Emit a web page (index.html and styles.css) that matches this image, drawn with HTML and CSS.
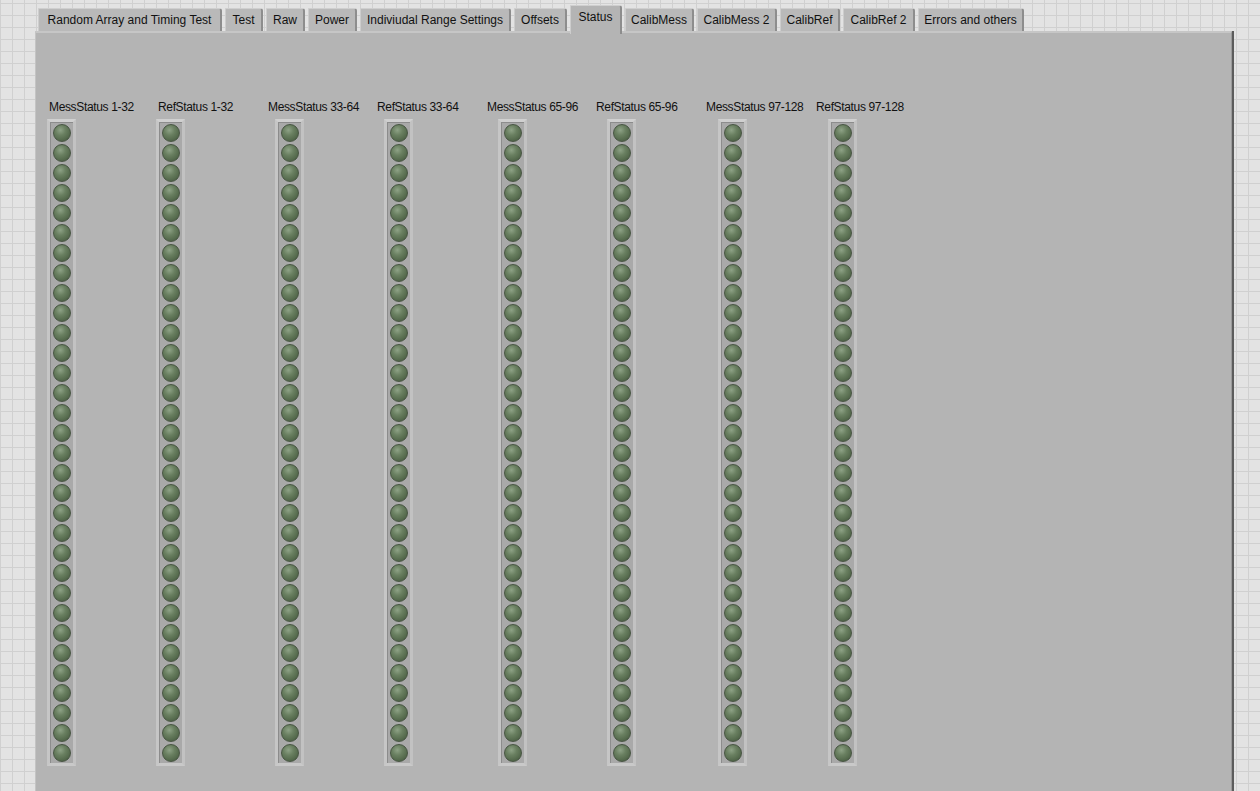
FILE: index.html
```html
<!DOCTYPE html>
<html>
<head>
<meta charset="utf-8">
<link rel="stylesheet" href="styles.css">
</head>
<body>
<div class="tabs">
  <div class="tab w1">Random Array and Timing Test</div>
  <div class="tab w2">Test</div>
  <div class="tab w3">Raw</div>
  <div class="tab w4">Power</div>
  <div class="tab w5">Indiviudal Range Settings</div>
  <div class="tab w6">Offsets</div>
  <div class="tab w7 active">Status</div>
  <div class="tab w8">CalibMess</div>
  <div class="tab w9">CalibMess 2</div>
  <div class="tab w10">CalibRef</div>
  <div class="tab w11">CalibRef 2</div>
  <div class="tab w12">Errors and others</div>
</div>
<div class="panel">
  <div class="columns" id="cols"></div>
</div>
<script src="app.js"></script>
</body>
</html>
```

FILE: app.js
```js
const cols = [
  ["MessStatus 1-32", "oa"],
  ["RefStatus 1-32", "oa"],
  ["MessStatus 33-64", "ob"],
  ["RefStatus 33-64", "ob"],
  ["MessStatus 65-96", "oc"],
  ["RefStatus 65-96", "oc"],
  ["MessStatus 97-128", "od"],
  ["RefStatus 97-128", "od"]
];
const root = document.getElementById("cols");
cols.forEach(([name, off]) => {
  const g = document.createElement("div");
  g.className = "group";
  const l = document.createElement("div");
  l.className = "label";
  l.textContent = name;
  g.appendChild(l);
  const f = document.createElement("div");
  f.className = "frame " + off;
  for (let i = 0; i < 32; i++) {
    const led = document.createElement("div");
    led.className = "led";
    f.appendChild(led);
  }
  g.appendChild(f);
  root.appendChild(g);
});
```

FILE: styles.css
```css
html, body {
  margin: 0;
  padding: 0;
}
body {
  width: 1260px;
  height: 791px;
  overflow: hidden;
  font-family: "Liberation Sans", Arial, sans-serif;
  color: #111;
  background-color: #e3e3e3;
  background-image:
    linear-gradient(to right, #d0d0d0 1px, transparent 1px),
    linear-gradient(to bottom, #d0d0d0 1px, transparent 1px);
  background-size: 12px 12px;
  background-position: 0 3px;
}
.tabs {
  display: flex;
  gap: 3px;
  padding-left: 38px;
  padding-top: 8px;
  height: 23px;
  align-items: flex-end;
}
.tab {
  box-sizing: border-box;
  height: 23px;
  background: #b9b9b9;
  border-top: 1px solid #cfcfcf;
  border-left: 1px solid #cdcdcd;
  border-right: 2px solid #8d8d8d;
  border-top-right-radius: 3px;
  font-size: 12px;
  line-height: 22px;
  text-align: center;
  white-space: nowrap;
}
.tab.active {
  height: 29px;
  margin-bottom: -3px;
  line-height: 22px;
  background: #b4b4b4;
  position: relative;
  z-index: 2;
}
.w1 { width: 184px; }
.w2 { width: 38px; }
.w3 { width: 39px; }
.w4 { width: 49px; }
.w5 { width: 151px; }
.w6 { width: 53px; }
.w7 { width: 52px; }
.w8 { width: 69px; }
.w9 { width: 80px; }
.w10 { width: 60px; }
.w11 { width: 72px; }
.w12 { width: 106px; }
.panel {
  box-sizing: border-box;
  margin-left: 35px;
  width: 1197px;
  height: 760px;
  background: #b4b4b4;
  border-top: 2px solid #c6c6c6;
  border-left: 1px solid #c4c4c4;
  border-right: 1px solid #9a9a9a;
  box-shadow: 2px 0 0 #5c5c5c;
  padding-top: 67px;
  padding-left: 12px;
}
.columns {
  display: grid;
  grid-template-columns: 109px 110px 109px 110px 109px 110px 110px 110px;
}
.group {
  display: flex;
  flex-direction: column;
}
.label {
  font-size: 12px;
  height: 15px;
  line-height: 15px;
  white-space: nowrap;
  letter-spacing: -0.35px;
  margin-left: 1px;
  margin-bottom: 4px;
}
.frame {
  box-sizing: border-box;
  width: 29px;
  height: 647px;
  background: #a9a9a9;
  border: 3px solid;
  border-color: #d0d0d0 #c2c2c2 #c9c9c9 #c6c6c6;
  box-shadow: inset 1px 1px 0 #8c8c8c;
  padding: 2px 0 0 3px;
  display: flex;
  flex-direction: column;
  gap: 2px;
}
.oa { margin-left: -1px; }
.ob { margin-left: 8px; }
.oc { margin-left: 12px; }
.od { margin-left: 13px; }
.led {
  box-sizing: border-box;
  width: 18px;
  height: 18px;
  border-radius: 50%;
  background: radial-gradient(circle at 40% 32%, #8ea286 0%, #6a8061 35%, #54694c 70%, #3d4f37 100%);
  border: 1px solid #475542;
}
```
